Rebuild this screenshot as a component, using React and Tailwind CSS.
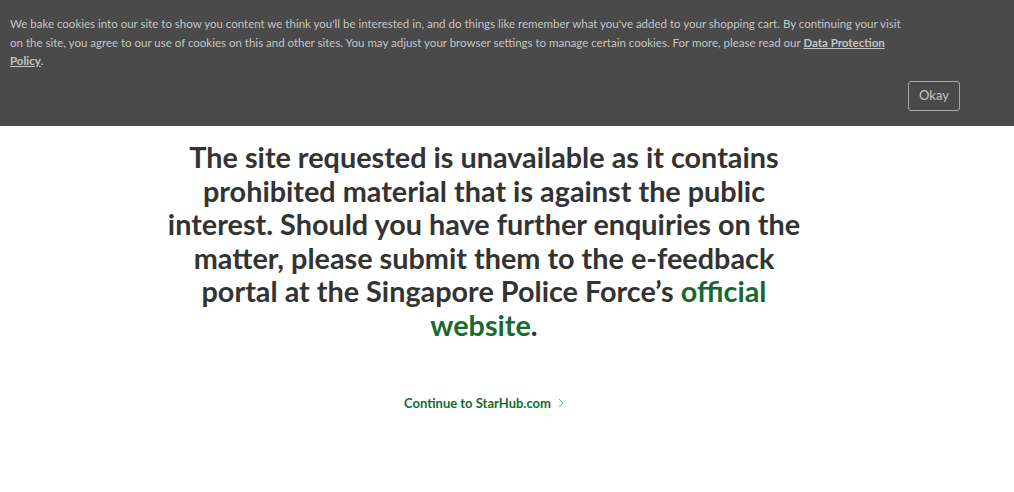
import React from "react";

export default function App() {
  return (
    <div className="w-[1014px] h-[492px] bg-white overflow-hidden" style={{ fontFamily: "Lato, 'Open Sans', sans-serif" }}>
      <div className="bg-[#4a4a4a] h-[126px] px-[10px] pt-[15px]">
        <p className="text-[11.5px] leading-[18.5px] text-[#c4c4c4] w-[900px]">
          We bake cookies into our site to show you content we think you'll be interested in, and do things like remember what you've added to your shopping cart. By continuing your visit on the site, you agree to our use of cookies on this and other sites. You may adjust your browser settings to manage certain cookies. For more, please read our{" "}
          <a className="font-bold underline">Data Protection Policy</a>.
        </p>
        <div className="flex justify-end pr-[44px] mt-[10px]">
          <button className="w-[52px] h-[30px] border border-[#a8a8a8] rounded-[3px] text-[13px] text-[#c4c4c4]">Okay</button>
        </div>
      </div>
      <div className="w-[640px] ml-[164px] flex flex-col items-center">
        <h1 className="text-center font-bold text-[28.8px] leading-[33.6px] text-[#333333] mt-[15px]">
          The site requested is unavailable as it contains prohibited material that is against the public interest. Should you have further enquiries on the matter, please submit them to the e-feedback portal at the Singapore Police Force’s <a className="text-[#156b2f]">official website</a>.
        </h1>
        <div className="mt-[51px] flex items-center gap-[7px] text-[13px] font-bold text-[#156b2f]">
          <span>Continue to StarHub.com</span>
          <svg width="6" height="10" viewBox="0 0 6 10" fill="none" stroke="#4fc46e" strokeWidth="1"><path d="M1 1l4 4-4 4" /></svg>
        </div>
      </div>
    </div>
  );
}
